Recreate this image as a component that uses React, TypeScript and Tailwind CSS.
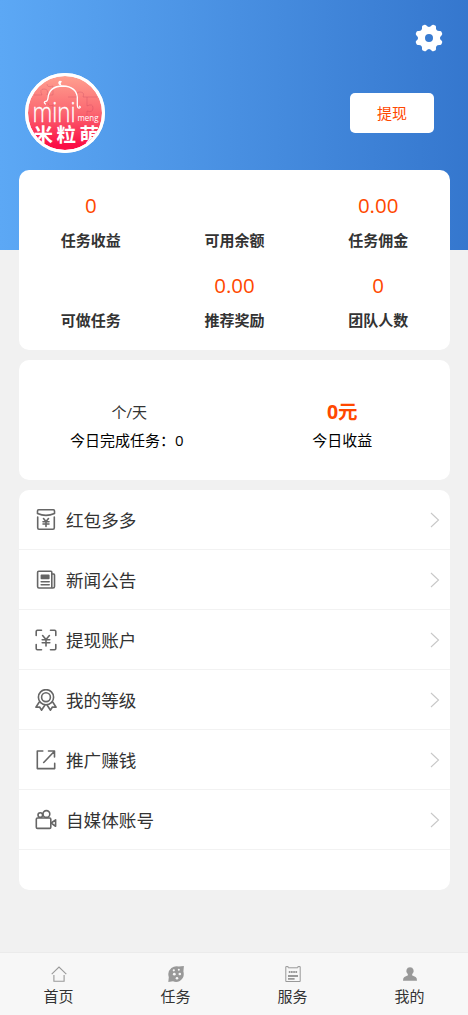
import React from "react";

const stats = [
  { value: "0", label: "任务收益" },
  { value: "", label: "可用余额" },
  { value: "0.00", label: "任务佣金" },
  { value: "", label: "可做任务" },
  { value: "0.00", label: "推荐奖励" },
  { value: "0", label: "团队人数" },
];

const line = {
  fill: "none",
  stroke: "#666",
  strokeWidth: 1.6,
  strokeLinecap: "round" as const,
  strokeLinejoin: "round" as const,
};

const menu = [
  {
    label: "红包多多",
    icon: (
      <g>
        <path d="M2.5 4.5V2Q2.5 .8 3.6 .8H18.4Q19.5 .8 19.5 2V4.5Q11 8.2 2.5 4.5ZM2.7 8V18.8Q2.7 20.2 4 20.2H18Q19.3 20.2 19.3 18.8V8" />
        <path d="m8.5 9.5 2.5 3 2.5-3M11 12.5v5M8 12.7h6M8 15h6" />
      </g>
    ),
  },
  {
    label: "新闻公告",
    icon: (
      <g>
        <path d="M16.8 18V3.2Q16.8 2.3 16 2.3H3.7Q2.6 2.3 2.6 3.4V17.5Q2.6 19 4 19H18Q19.5 19 19.5 17.5V6.2Q19.5 4.8 17.4 4.8M6.2 12.8h8M6.2 15.8h8" />
        <path d="M6.4 6.2h7.4v3.3H6.4Z" fill="#666" />
      </g>
    ),
  },
  {
    label: "提现账户",
    icon: (
      <g>
        <path d="M1.2 6.5V2.4Q1.2 1.2 2.4 1.2H6.5M15.5 1.2H19.6Q20.8 1.2 20.8 2.4V6.5M20.8 15.5V19.6Q20.8 20.8 19.6 20.8H15.5M6.5 20.8H2.4Q1.2 20.8 1.2 19.6V15.5" />
        <path d="M7.6 6.6 11 10.6l3.4-4M11 10.6v6.4M7.2 10.8h7.6M7.2 13.8h7.6" />
      </g>
    ),
  },
  {
    label: "我的等级",
    icon: (
      <g>
        <circle cx="11" cy="8.2" r="7.6" />
        <circle cx="11" cy="8.2" r="4.4" />
        <path d="M4.3 13 .9 18.2l3.7-.2 1.9 3.2 3.3-5M17.7 13l3.4 5.2-3.7-.2-1.9 3.2-3.3-5" />
      </g>
    ),
  },
  {
    label: "推广赚钱",
    icon: <path d="M7.8 2H2.3v17.6h17.4v-5.2M8.7 13.5 19.2 2.5M13.5 2h6v5.9" />,
  },
  {
    label: "自媒体账号",
    icon: (
      <g>
        <rect x="1.3" y="9" width="14.5" height="10.4" rx="1.2" />
        <circle cx="5.3" cy="6" r="2.3" />
        <circle cx="11.4" cy="5" r="3.4" />
        <path d="m16.2 14 4.4-3.2v6.5L16.2 14Z" />
      </g>
    ),
  },
];

const tabs = [
  {
    label: "首页",
    icon: <path d="M.7 8.2 8 1l7.3 7.2M2.9 9v6.3h10.2V9" fill="none" stroke="#999" strokeWidth="1.1" />,
  },
  {
    label: "任务",
    icon: (
      <g>
        <path d="M10.8.6 15.9 0 15.4 5.5Q17 11.5 11.8 14.9 8.5 16.7 5 15.3L.3 15.9 .8 11.2Q-1 5.5 3.4 1.9 7-.6 10.8.6Z" fill="#999" />
        <circle cx="5.8" cy="4.3" r="1.1" fill="#f7f7f7" />
        <circle cx="10.8" cy="3.8" r="1" fill="#f7f7f7" />
        <circle cx="6.3" cy="8.2" r="1.4" fill="#f7f7f7" />
        <circle cx="11.8" cy="8" r="1.3" fill="#f7f7f7" />
        <circle cx="9" cy="12.3" r="1.3" fill="#f7f7f7" />
      </g>
    ),
  },
  {
    label: "服务",
    icon: (
      <g fill="none" stroke="#999">
        <path d="M.8 .6h2.4v1.2h9.6V.6h2.4V15.5H.8Z" strokeWidth="1" />
        <path d="M3.8 5.9h8.6" strokeWidth="2" strokeDasharray="1.7 .5" />
        <path d="M3 10h10M3 12.9h6.6" strokeWidth="1.8" />
      </g>
    ),
  },
  {
    label: "我的",
    icon: (
      <path d="M8 1.3a3.7 3.7 0 0 1 2.3 6.6l-.3 1.4 3.6 1.6q1.4.8 1.4 3.8H1q0-3 1.4-3.8L6 9.3l-.3-1.4A3.7 3.7 0 0 1 8 1.3Z" fill="#999" />
    ),
  },
];

function gearPath() {
  const at = (deg: number, r: number) => {
    const a = (deg * Math.PI) / 180;
    return `${(13 + r * Math.cos(a)).toFixed(2)} ${(13 + r * Math.sin(a)).toFixed(2)}`;
  };
  let d = "";
  for (let i = 0; i < 8; i++) {
    const c = 22.5 + i * 45;
    d += `${i ? "L" : "M"}${at(c - 10, 13)}Q${at(c - 8, 13.9)} ${at(c - 4, 13.9)}L${at(c + 4, 13.9)}Q${at(c + 8, 13.9)} ${at(c + 10, 13)}`;
    d += `Q${at(c + 22.5, 9.2)} ${at(c + 35, 13)}`;
  }
  return `${d}ZM13 9a4 4 0 1 0 0 8 4 4 0 0 0 0-8Z`;
}

function Avatar() {
  return (
    <svg className="size-20" viewBox="0 0 80 80" aria-label="米粒萌">
      <defs>
        <linearGradient id="pink" x1="0" y1="0" x2="0" y2="1">
          <stop offset="0" stopColor="#ffa592" />
          <stop offset=".5" stopColor="#fb6670" />
          <stop offset=".9" stopColor="#fb0e45" />
        </linearGradient>
        <clipPath id="disc">
          <circle cx="40" cy="40" r="37" />
        </clipPath>
      </defs>
      <circle cx="40" cy="40" r="40" fill="#fff" />
      <g clipPath="url(#disc)">
        <path fill="url(#pink)" d="M0 0h80v80H0z" />
        <path
          d="M9 22h8q-3-6 2-6t3 6h6v-9q-6 2-6-2M43 24h9q-2-5 3-5t3 5h14M62 24v9q6-3 6 2t-6 3v6M28 40v-8q-5 2-5-2"
          fill="none"
          stroke="#a62d55"
          strokeOpacity=".2"
          strokeWidth="1"
        />
        <path
          d="M20.5 31Q18.6 30 19.8 28.6 22.6 28.6 23 25 24 13.2 38 13 51 13.6 52.3 24V32Q52.5 35.6 54.6 35 56 34 54.6 33.2"
          fill="none"
          stroke="#fff"
          strokeWidth="1.3"
          strokeLinecap="round"
        />
        <path d="M37.5 13Q33 12.5 33.3 9.3 34.5 6.8 37 8.6 36.4 9.3 35.7 10.4 36 12 37.5 13Z" fill="#fff" />
        <text x="7.5" y="48.5" textLength="43" lengthAdjust="spacingAndGlyphs" fill="#fff" stroke="#fff" strokeWidth=".3" className="font-['Open_Sans',sans-serif] text-[27px] font-light">mini</text>
        <text x="52.5" y="47.5" textLength="21" lengthAdjust="spacingAndGlyphs" fill="#fff" className="font-['Open_Sans',sans-serif] text-[8.5px]">meng</text>
        <text x="8.5" y="69" textLength="65.5" fill="#fff" className="font-['Noto_Sans_CJK_SC',sans-serif] text-[19.5px] font-bold">米粒萌</text>
      </g>
      <circle cx="40" cy="40" r="38.5" fill="none" stroke="#fff" strokeWidth="3" />
    </svg>
  );
}

export default function App() {
  return (
    <div className="flex h-[1015px] w-full flex-col overflow-hidden bg-[#f1f1f1] font-['Open_Sans','Noto_Sans_CJK_SC',sans-serif] text-[15px] text-[#333]">
      <header className="h-[250px] shrink-0 bg-linear-[90deg,#5ca8f5,#3577ce] px-[25px] pt-[25px]">
        <div className="flex justify-end pr-px">
          <svg className="size-[26px] overflow-visible" viewBox="0 0 26 26" aria-label="设置">
            <path fill="#fff" fillRule="evenodd" d={gearPath()} />
          </svg>
        </div>
        <div className="mt-[22px] flex items-center justify-between pr-[9px]">
          <Avatar />
          <button className="h-10 w-[84px] rounded-[5px] bg-white text-[15px] text-[#ff4800]">提现</button>
        </div>
      </header>

      <main className="-mt-20 mr-[18px] ml-[19px] flex flex-1 flex-col gap-[10px]">
        <section className="grid h-[180px] grid-cols-3 rounded-[10px] bg-white pt-5">
          {stats.map((s) => (
            <div key={s.label} className="h-20 text-center">
              <div className="h-8 text-[20.5px] leading-[30px] text-[#ff4800]">{s.value}</div>
              <div className="mt-[6px] h-6 text-[15px] leading-6 font-bold">{s.label}</div>
            </div>
          ))}
        </section>

        <section className="grid h-[120px] grid-cols-2 rounded-[10px] bg-white pt-[38px] text-center">
          <div>
            <div className="h-7 pl-[5px] leading-7">个/天</div>
            <div className="leading-7 text-black">今日完成任务：0</div>
          </div>
          <div>
            <div className="h-7 text-[19.5px] leading-7 font-bold text-[#ff4800]">0元</div>
            <div className="leading-7 text-black">今日收益</div>
          </div>
        </section>

        <section className="h-[400px] rounded-[10px] bg-white">
          {menu.map((m) => (
            <div key={m.label} className="flex h-[60px] items-center border-b border-[#f2f2f2] pr-[10px] pl-4">
              <svg className="size-[22px]" viewBox="0 0 22 22" {...line}>{m.icon}</svg>
              <span className="ml-[9px] text-[17.6px] leading-7">{m.label}</span>
              <svg className="ml-auto h-4 w-[10px]" viewBox="0 0 10 16" fill="none" stroke="#c8c8c8" strokeWidth="1.1">
                <path d="m1 1 7.5 7L1 15" />
              </svg>
            </div>
          ))}
        </section>
      </main>

      <nav className="grid h-[63px] shrink-0 grid-cols-4 border-t border-[#ebebeb] bg-[#f7f7f7]">
        {tabs.map((t) => (
          <div key={t.label} className="flex flex-col items-center pt-[13px]">
            <svg className="size-4" viewBox="0 0 16 16">{t.icon}</svg>
            <span className="mt-1 text-[15px] leading-5">{t.label}</span>
          </div>
        ))}
      </nav>
    </div>
  );
}
